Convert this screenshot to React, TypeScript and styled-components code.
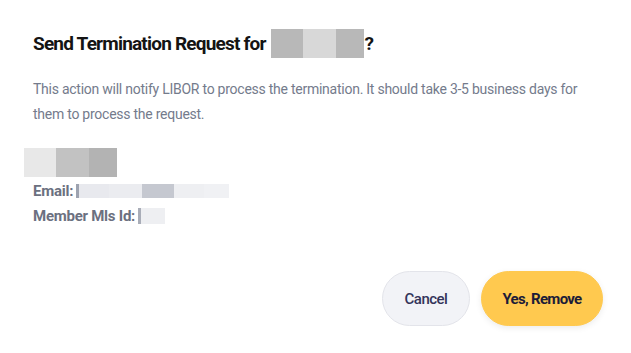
import React from 'react';
import styled, { createGlobalStyle } from 'styled-components';

const GlobalStyle = createGlobalStyle`
  body {
    margin: 0;
    background: #ffffff;
    font-family: Roboto, "DejaVu Sans Condensed", sans-serif;
  }
`;

type Cell = { w: number; c: string };

const Modal = styled.div`
  width: 631px;
  height: 353px;
  box-sizing: border-box;
  padding: 29px 28px 0 33px;
  display: flex;
  flex-direction: column;
`;

const TitleRow = styled.div`
  display: flex;
  align-items: center;
  height: 29px;
`;

const Title = styled.h2`
  margin: 0;
  font-size: 19px;
  font-weight: 700;
  letter-spacing: -0.8px;
  color: #141414;
  line-height: 29px;
`;

const Blur = styled.div<{ h: number }>`
  display: flex;
  height: ${p => p.h}px;
  flex-shrink: 0;
`;

const BlurCell = styled.span<{ w: number; c: string }>`
  display: block;
  width: ${p => p.w}px;
  height: 100%;
  background: ${p => p.c};
`;

const TitleBlur = styled(Blur)`
  margin-left: 5px;
  margin-right: 1px;
`;

const Description = styled.p`
  margin: 19px 0 0;
  width: 560px;
  font-size: 14px;
  line-height: 25px;
  letter-spacing: -0.25px;
  color: #747b8c;
`;

const NameBlur = styled(Blur)`
  margin: 21px 0 0 -9px;
`;

const Details = styled.div`
  display: flex;
  flex-direction: column;
  margin-top: 1px;
`;

const DetailRow = styled.div`
  display: flex;
  align-items: center;
  height: 25px;
`;

const Label = styled.span`
  font-size: 15px;
  font-weight: 700;
  letter-spacing: -0.25px;
  color: #6b7080;
  margin-right: 3px;
`;

const Actions = styled.div`
  display: flex;
  justify-content: flex-end;
  gap: 11px;
  margin-top: 43px;
`;

const Button = styled.button<{ primary?: boolean; w: number }>`
  width: ${p => p.w}px;
  height: 55px;
  padding: 0;
  border-radius: 28px;
  border: 1px solid ${p => (p.primary ? '#ffc94f' : '#e3e4ea')};
  background: ${p => (p.primary ? '#ffc94f' : '#f2f3f7')};
  color: ${p => (p.primary ? '#1c1c38' : '#34345a')};
  font-family: Roboto, sans-serif;
  font-size: 15px;
  font-weight: ${p => (p.primary ? 700 : 500)};
  letter-spacing: ${p => (p.primary ? -0.7 : -0.5)}px;
  cursor: pointer;
  box-shadow: ${p => (p.primary ? '0 2px 6px rgba(0,0,0,0.08)' : 'none')};
`;

const renderCells = (cells: Cell[]) =>
  cells.map((cell, i) => <BlurCell key={i} w={cell.w} c={cell.c} />);

export default function App() {
  return (
    <>
      <GlobalStyle />
      <Modal>
        <TitleRow>
          <Title>Send Termination Request for</Title>
          <TitleBlur h={29}>
            {renderCells([
              { w: 32, c: '#b8b8b8' },
              { w: 33, c: '#d8d8d8' },
              { w: 28, c: '#b8b8b8' },
            ])}
          </TitleBlur>
          <Title>?</Title>
        </TitleRow>
        <Description>
          This action will notify LIBOR to process the termination. It should take 3-5 business days for
          them to process the request.
        </Description>
        <NameBlur h={29}>
          {renderCells([
            { w: 32, c: '#e8e8e8' },
            { w: 33, c: '#c2c2c2' },
            { w: 28, c: '#b3b3b3' },
          ])}
        </NameBlur>
        <Details>
          <DetailRow>
            <Label>Email:</Label>
            <Blur h={14}>
              {renderCells([
                { w: 3, c: '#9ea3b0' },
                { w: 30, c: '#e8e9ee' },
                { w: 33, c: '#ebecf0' },
                { w: 32, c: '#c5c8d0' },
                { w: 30, c: '#eeeff2' },
                { w: 25, c: '#f0f1f4' },
              ])}
            </Blur>
          </DetailRow>
          <DetailRow>
            <Label>Member Mls Id:</Label>
            <Blur h={16}>
              {renderCells([
                { w: 3, c: '#a9adb8' },
                { w: 24, c: '#eeeff2' },
              ])}
            </Blur>
          </DetailRow>
        </Details>
        <Actions>
          <Button w={88}>Cancel</Button>
          <Button primary w={122}>Yes, Remove</Button>
        </Actions>
      </Modal>
    </>
  );
}
